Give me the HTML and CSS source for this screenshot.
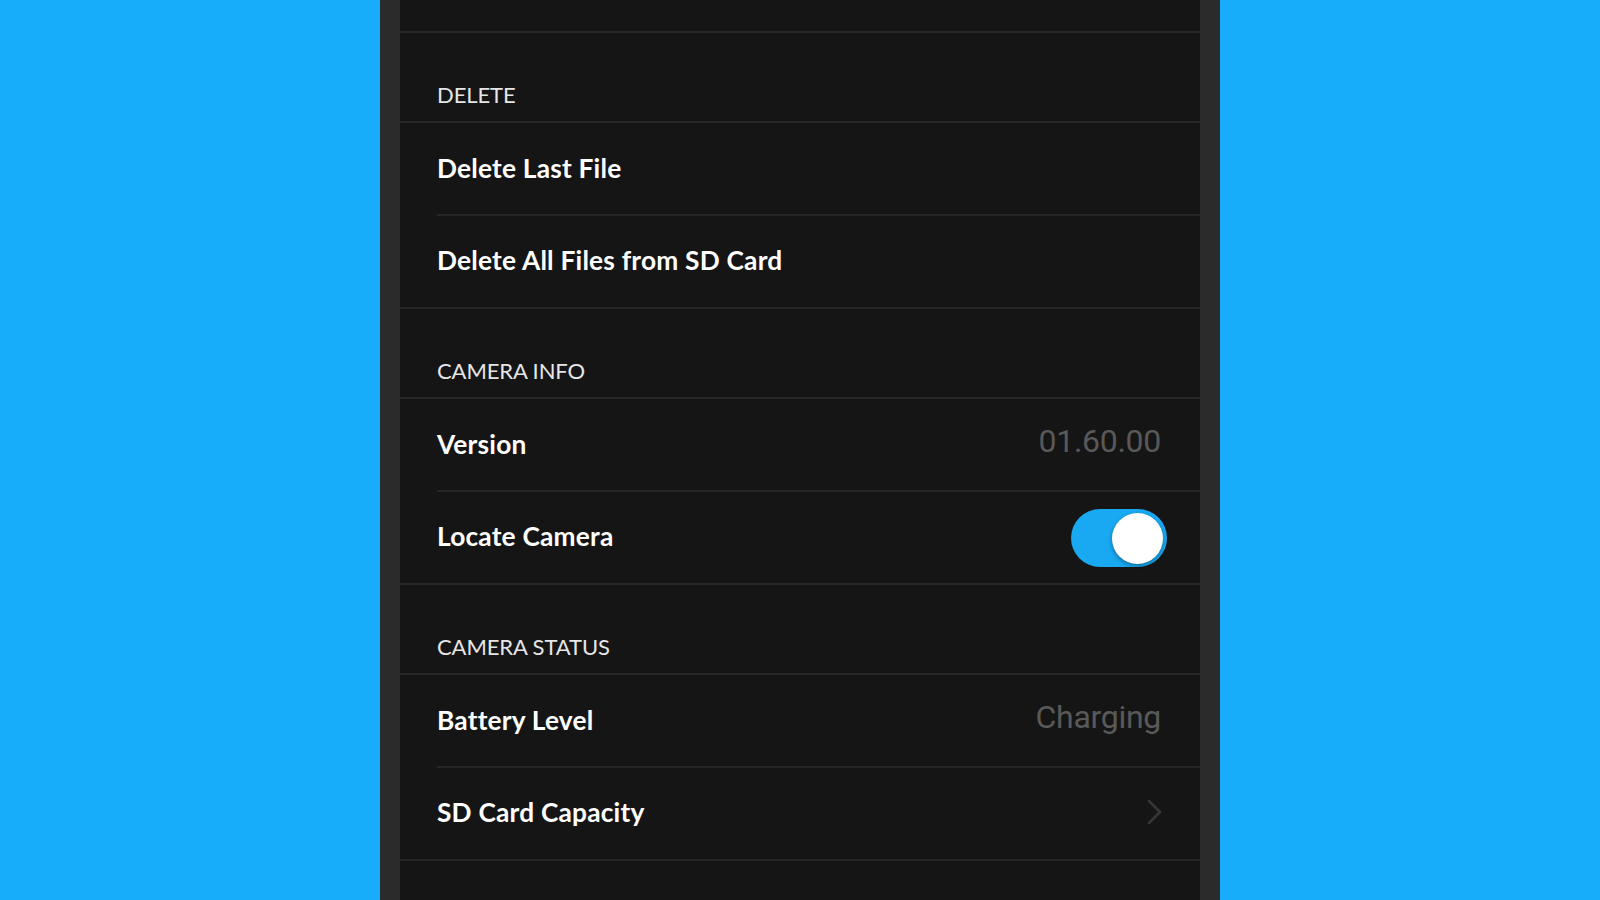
FILE: index.html
```html
<!DOCTYPE html>
<html lang="en">

<head>
    <meta charset="UTF-8" />
    <meta name="viewport" content="width=device-width, initial-scale=1" />
    <title>Camera Settings</title>
    <link rel="stylesheet" href="styles.css">
</head>

<body>
    <main class="phone" role="main" aria-label="Camera settings">
        <div class="stub"></div>

        <h3 class="section-title">Delete</h3>
        <div class="row inset">
            <span class="row-label">Delete Last File</span>
        </div>
        <div class="row">
            <span class="row-label">Delete All Files from SD Card</span>
        </div>

        <h3 class="section-title">Camera Info</h3>
        <div class="row inset">
            <span class="row-label">Version</span>
            <span class="row-value">01.60.00</span>
        </div>
        <div class="row row-toggle">
            <span class="row-label">Locate Camera</span>
            <label class="switch">
                <input type="checkbox" checked aria-label="Locate Camera" />
                <span class="knob"></span>
            </label>
        </div>

        <h3 class="section-title">Camera Status</h3>
        <div class="row inset">
            <span class="row-label">Battery Level</span>
            <span class="row-value">Charging</span>
        </div>
        <div class="row row-link">
            <span class="row-label">SD Card Capacity</span>
            <svg class="chevron" width="16" height="26" viewBox="0 0 16 26" aria-hidden="true">
                <polyline points="2,2 13,13 2,24" fill="none" stroke="#353535" stroke-width="2.8" stroke-linecap="round" stroke-linejoin="round" />
            </svg>
        </div>
    </main>
</body>

</html>
```

FILE: styles.css
```css
/* Reset */

* {
    margin: 0;
    padding: 0;
    box-sizing: border-box;
}

body {
    font-family: 'Lato', 'Open Sans', sans-serif;
    background: #17adfb;
    color: #ffffff;
    height: 100vh;
    overflow: hidden;
}

.phone {
    width: 840px;
    height: 100vh;
    margin: 0 auto;
    background: #151515;
    border-left: 20px solid #2b2b2b;
    border-right: 20px solid #2b2b2b;
}

.stub {
    height: 33px;
    border-bottom: 2px solid #262626;
}

.section-title {
    height: 90px;
    display: flex;
    align-items: flex-end;
    padding: 0 37px 13px;
    font-weight: 400;
    font-size: 22px;
    line-height: 26px;
    color: #e6e6e6;
    text-transform: uppercase;
    letter-spacing: -0.1px;
    border-bottom: 2px solid #262626;
}

.row {
    height: 93px;
    display: flex;
    align-items: center;
    justify-content: space-between;
    padding: 0 39px 4px 37px;
    position: relative;
    border-bottom: 2px solid #262626;
}

.row.inset {
    border-bottom: none;
}

.row.inset::after {
    content: '';
    position: absolute;
    left: 37px;
    right: 0;
    bottom: 0;
    height: 2px;
    background: #262626;
}

.row-label {
    font-weight: 700;
    font-size: 26.3px;
    letter-spacing: 0.2px;
}

.row-value {
    font-family: 'Roboto', 'Liberation Sans', sans-serif;
    font-size: 32px;
    font-weight: 400;
    color: #595959;
    letter-spacing: -0.3px;
    margin-top: -6px;
}

.row-toggle {
    padding-right: 33px;
}

.row-link {
    padding-right: 37px;
}

/* Switch */

.switch {
    position: relative;
    width: 96px;
    height: 58px;
    margin-top: 4px;
    display: block;
    cursor: pointer;
}

.switch input {
    display: none;
}

.knob {
    position: absolute;
    inset: 0;
    border-radius: 29px;
    background: #19a8f2;
}

.knob::before {
    content: '';
    position: absolute;
    top: 4px;
    right: 4px;
    width: 51px;
    height: 51px;
    border-radius: 50%;
    background: #ffffff;
    box-shadow: 0 2px 4px rgba(0, 0, 0, 0.35);
}

.chevron {
    display: block;
}
```
